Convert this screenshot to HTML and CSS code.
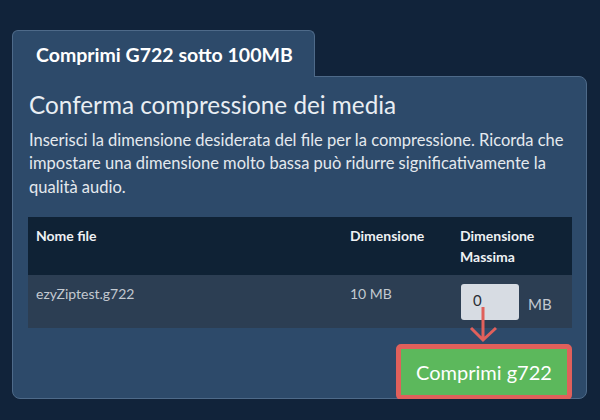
FILE: index.html
```html
<!DOCTYPE html>
<html lang="it">
<head>
<meta charset="utf-8">
<title>Comprimi G722</title>
<link rel="stylesheet" href="styles.css">
</head>
<body>
<div class="wrap">
  <div class="tab">Comprimi G722 sotto 100MB</div>
  <div class="panel">
    <h1 class="title">Conferma compressione dei media</h1>
    <p class="desc">Inserisci la dimensione desiderata del file per la compressione. Ricorda che impostare una dimensione molto bassa può ridurre significativamente la qualità audio.</p>
    <div class="table">
      <div class="row head">
        <div class="cell">Nome file</div>
        <div class="cell">Dimensione</div>
        <div class="cell">Dimensione Massima</div>
      </div>
      <div class="row body">
        <div class="cell">ezyZiptest.g722</div>
        <div class="cell">10 MB</div>
        <div class="cell sizecell">
          <span class="input">0</span>
          <span class="unit">MB</span>
          <svg class="arrow" width="30" height="36" viewBox="0 0 30 36">
            <path d="M13 0 V33 M1 21 L13 33 L26 21" fill="none" stroke="#e0605b" stroke-width="3"/>
          </svg>
        </div>
      </div>
    </div>
    <div class="actions">
      <button class="btn">Comprimi g722</button>
    </div>
  </div>
</div>
</body>
</html>
```

FILE: styles.css
```css
html, body {
  margin: 0;
  padding: 0;
  background: #11233a;
  font-family: Lato, "Open Sans", sans-serif;
}
.wrap {
  padding: 30px 13px 0 12px;
}
.tab {
  position: relative;
  z-index: 1;
  box-sizing: border-box;
  width: 303px;
  height: 47px;
  margin-bottom: -1px;
  padding: 13px 0 0 23px;
  background: #2d4a6a;
  border: 1px solid #4e6a89;
  border-bottom: none;
  border-radius: 6px 6px 0 0;
  color: #ffffff;
  font-weight: 700;
  font-size: 19.5px;
  line-height: 22px;
}
.panel {
  background: #2d4a6a;
  border: 1px solid #4e6a89;
  border-radius: 0 8px 8px 8px;
  padding: 15px 14px 14px 15px;
  height: 323px;
  box-sizing: border-box;
}
.title {
  margin: 0 0 11px 1px;
  font-size: 24.3px;
  font-weight: 400;
  line-height: 26px;
  color: #e9eef3;
}
.desc {
  margin: 0 0 18px 1px;
  font-size: 16.5px;
  line-height: 23.3px;
  color: #e4e9ee;
}
.table {
  display: flex;
  flex-direction: column;
}
.row {
  display: grid;
  grid-template-columns: 314px 110px 120px;
}
.head {
  background: #0f2235;
  color: #eef1f4;
  font-weight: 700;
  font-size: 14px;
  line-height: 21px;
}
.head .cell {
  padding: 8px;
}
.body {
  background: #2c3e53;
  color: #c3c9d0;
  font-size: 14px;
  line-height: 21px;
}
.body .cell {
  padding: 8px;
}
.sizecell {
  position: relative;
  display: flex;
  align-items: center;
  gap: 9px;
  padding-top: 9px !important;
  padding-left: 9px !important;
}
.input {
  box-sizing: border-box;
  width: 58px;
  height: 36px;
  padding: 6px 0 0 12px;
  background: #d7dce3;
  border-radius: 3px;
  color: #2b2f35;
  font-size: 15px;
}
.unit {
  color: #c3c9d0;
  font-size: 15px;
  padding-top: 5px;
}
.arrow {
  position: absolute;
  left: 18px;
  top: 32px;
  overflow: visible;
}
.actions {
  display: flex;
  justify-content: flex-end;
  margin-top: 16px;
}
.btn {
  box-sizing: border-box;
  width: 176px;
  height: 56px;
  background: #5cb85c;
  border: 5px solid #e0605b;
  border-radius: 5px;
  color: #ffffff;
  font-family: Lato, "Open Sans", sans-serif;
  font-size: 20px;
  padding: 0;
}
```
